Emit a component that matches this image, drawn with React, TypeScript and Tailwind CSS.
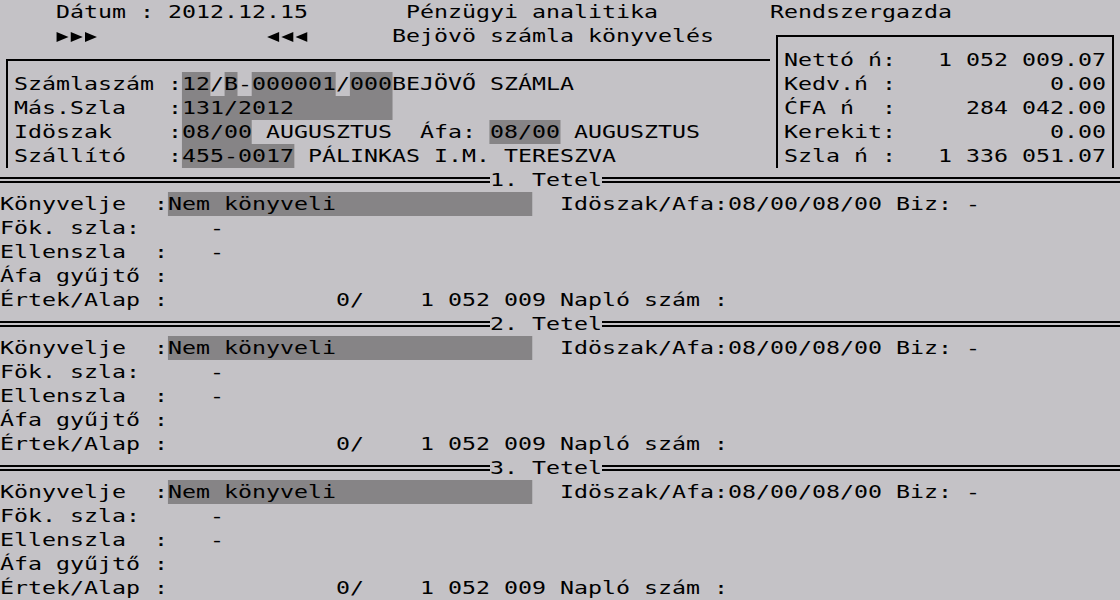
import React from "react";

// 80x25 text screen, 14px x 24px cells. Glyphs are widened with scaleX.
function T({ children }: { children: React.ReactNode }) {
  return (
    <span className="block h-[24px] leading-[24px] whitespace-pre origin-left [transform:scaleX(1.2919)]">
      {children}
    </span>
  );
}

function H({ children }: { children: React.ReactNode }) {
  return <span className="inline-block h-[24px] align-top bg-[#868486]">{children}</span>;
}

function Row({ children }: { children: React.ReactNode }) {
  return (
    <div className="h-[24px]">
      <T>{children}</T>
    </div>
  );
}

// one cell wide triangle, like the CP437 arrow glyphs
function Arrow({ left }: { left?: boolean }) {
  return (
    <svg
      className="inline-block h-[24px] w-[1ch] align-top"
      viewBox="0 0 14 24"
      preserveAspectRatio="none"
    >
      <polygon points={left ? "13,8 1,13 13,18" : "1,8 13,13 1,18"} fill="#000" />
    </svg>
  );
}

function Title({ n }: { n: number }) {
  return (
    <div className="flex h-[24px] items-center">
      <div className="h-[6px] w-[490px] border-y-2 border-black" />
      <div className="h-[24px] w-[112px]">
        <T>{n}. Tetel</T>
      </div>
      <div className="h-[6px] flex-1 border-y-2 border-black" />
    </div>
  );
}

function Tetel({ n }: { n: number }) {
  return (
    <>
      <Title n={n} />
      <Row>
        Könyvelje  :<H>Nem könyveli              </H>  Idöszak/Afa:08/00/08/00 Biz: -
      </Row>
      <Row>Fök. szla:     -</Row>
      <Row>Ellenszla  :   -</Row>
      <Row>Áfa gyűjtő :</Row>
      <Row>Értek/Alap :            0/    1 052 009 Napló szám :</Row>
    </>
  );
}

export default function App() {
  return (
    <div className="w-[1120px] h-[600px] overflow-hidden bg-[#c4c2c6] text-black text-[18px] leading-[24px] font-['DejaVu_Sans_Mono',monospace]">
      <Row>    Dátum : 2012.12.15       Pénzügyi analitika        Rendszergazda</Row>

      <div className="flex">
        <div className="w-[770px]">
          <Row>
            {"    "}
            <Arrow />
            <Arrow />
            <Arrow />
            {"            "}
            <Arrow left />
            <Arrow left />
            <Arrow left />
            {"      "}Bejövö számla könyvelés
          </Row>
          <div className="ml-[6px] mt-[11px] border-l-2 border-t-2 border-black pl-[6px] pt-[11px]">
            <Row>
              Számlaszám :<H>12</H>/<H>B</H>-<H>000001</H>/<H>000</H>BEJÖVŐ SZÁMLA
            </Row>
            <Row>
              Más.Szla   :<H>131/2012       </H>
            </Row>
            <Row>
              Idöszak    :<H>08/00</H> AUGUSZTUS  Áfa: <H>08/00</H> AUGUSZTUS
            </Row>
            <Row>
              Szállító   :<H>455-0017</H> PÁLINKAS I.M. TERESZVA
            </Row>
          </div>
        </div>
        <div className="w-[350px]">
          <div className="mx-[6px] mt-[11px] border-2 border-b-0 border-black px-[6px] pt-[11px]">
            <Row>Nettó ń:   1 052 009.07</Row>
            <Row>Kedv.ń :           0.00</Row>
            <Row>ĆFA ń  :     284 042.00</Row>
            <Row>Kerekit:           0.00</Row>
            <Row>Szla ń :   1 336 051.07</Row>
          </div>
        </div>
      </div>

      <Tetel n={1} />
      <Tetel n={2} />
      <Tetel n={3} />
    </div>
  );
}
